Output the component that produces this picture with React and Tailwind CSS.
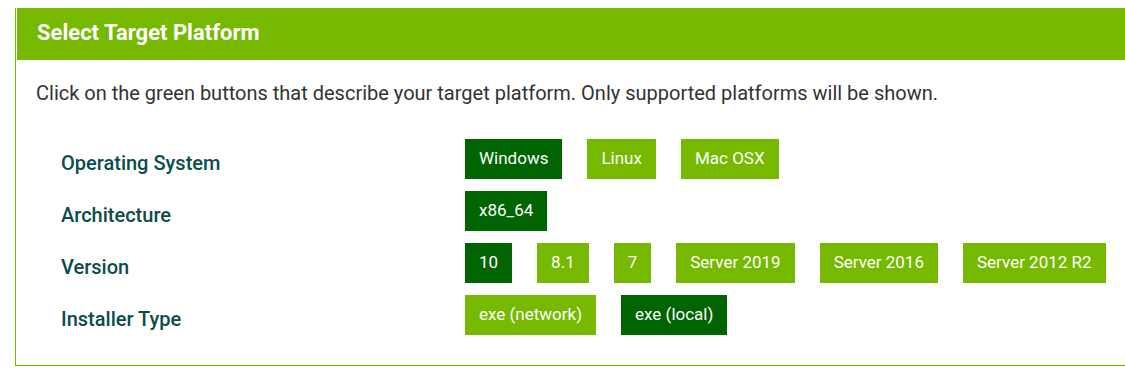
const rows = [
  { label: 'Operating System', options: [['Windows', true], ['Linux'], ['Mac OSX']] },
  { label: 'Architecture', options: [['x86_64', true]] },
  {
    label: 'Version',
    options: [['10', true], ['8.1'], ['7'], ['Server 2019'], ['Server 2016'], ['Server 2012 R2']],
  },
  { label: 'Installer Type', options: [['exe (network)'], ['exe (local)', true]] },
];

const App = () => {
  return (
    <div className="bg-white w-[1125px] h-[382px] pt-2 pl-[15px] font-['Roboto',sans-serif]">
      {/* green frame on left and bottom */}
      <div className="bg-[#76b900] pl-px pb-px h-[358px]">
        <div className="bg-white h-full">
          <div className="ml-px h-[52px] bg-[#76b900] flex items-center pl-5 pb-1">
            <h2 className="text-white text-[22px] font-bold">Select Target Platform</h2>
          </div>
          <p className="pl-5 pt-[21px] text-[20px] text-[#333] leading-[24px]">
            Click on the green buttons that describe your target platform. Only supported platforms will be shown.
          </p>
          <div className="mt-[34px] flex flex-col gap-3">
            {rows.map((row) => (
              <div key={row.label} className="flex items-center">
                <div className="w-[449px] pl-[45px] pt-2 text-[20px] font-medium text-[#0b4c4c]">{row.label}</div>
                <div className="flex gap-[25px]">
                  {row.options.map(([name, active]) => (
                    <button
                      key={name}
                      className={
                        'h-10 px-[14px] text-[17px] text-white ' +
                        (active ? 'bg-[#006400]' : 'bg-[#76b900]')
                      }
                    >
                      {name}
                    </button>
                  ))}
                </div>
              </div>
            ))}
          </div>
        </div>
      </div>
    </div>
  );
};

export default App;
